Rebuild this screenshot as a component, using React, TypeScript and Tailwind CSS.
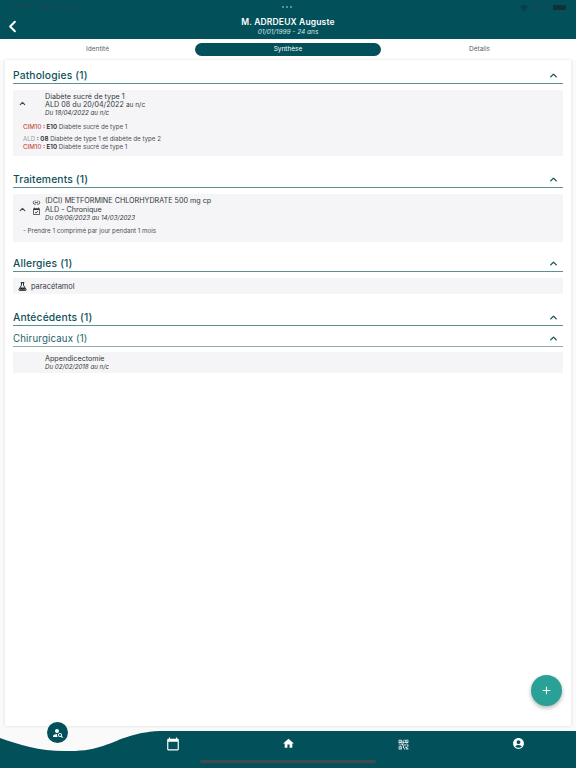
import { ChevronLeft, ChevronUp, Wifi } from "lucide-react";
import {
  MdAccountCircle,
  MdAdd,
  MdCalendarToday,
  MdEventAvailable,
  MdHome,
  MdLink,
  MdPersonSearch,
  MdQrCode2,
} from "react-icons/md";

const font = "font-['Inter','Liberation_Sans',sans-serif]";

function SectionTitle({ title, top }: { title: string; top: string }) {
  return (
    <div className={`flex h-[16px] items-center justify-between ${top}`}>
      <span className="text-[10.3px] font-medium leading-none tracking-[0.15px] text-[#0f5159]">
        {title}
      </span>
      <ChevronUp size={11} strokeWidth={3} className="mr-1 text-[#14525a]" />
    </div>
  );
}

function Rule() {
  return <div className="h-[1px] bg-[#5d9190]" />;
}

function Code({ label, code, text, muted }: { label: string; code: string; text: string; muted?: boolean }) {
  return (
    <p className="text-[6.2px] leading-[7.5px] text-[#4b4f52]">
      <span className={muted ? "text-[#9a9ca0]" : "font-medium text-[#c8503f]"}>{label}</span>
      <span className="font-semibold text-[#26292b]"> : {code}</span> {text}
    </p>
  );
}

function Flask() {
  return (
    <svg viewBox="0 0 10 10" width="9" height="9" className="text-[#26292b]">
      <path d="M3 0.7 H7 M3.9 0.7 V3.6 L1 8.4 Q0.7 9.3 1.6 9.3 H8.4 Q9.3 9.3 9 8.4 L6.1 3.6 V0.7" fill="none" stroke="currentColor" strokeWidth="1.1" />
      <path d="M2.8 6 H7.2 L8.2 8.5 H1.8 Z" fill="currentColor" />
    </svg>
  );
}

export default function App() {
  return (
    <div className={`relative flex h-[768px] w-[576px] flex-col overflow-hidden bg-[#fafafa] ${font}`}>
      <header className="relative h-[39px] shrink-0 bg-[#02505a] text-white">
        <div className="flex h-[15px] items-center justify-between pl-[9px] pr-[10px] text-[6.5px] font-medium text-[#1d4650]">
          <span>1:50 PM&nbsp;&nbsp; Mardi 13 juin</span>
          <span className="absolute left-[282px] top-[6px] flex gap-[2px]">
            <i className="h-[2px] w-[2px] rounded-full bg-[#7da5aa]" />
            <i className="h-[2px] w-[2px] rounded-full bg-[#7da5aa]" />
            <i className="h-[2px] w-[2px] rounded-full bg-[#7da5aa]" />
          </span>
          <span className="flex items-center gap-[3px]">
            <Wifi size={8} strokeWidth={3} className="text-[#10303a]" />
            100 %
            <i className="h-[5px] w-[13px] rounded-[1px] bg-[#10303a]" />
          </span>
        </div>
        <ChevronLeft size={19} strokeWidth={2.5} className="absolute left-[3px] top-[17px] text-white" />
        <div className="text-center">
          <p className="mt-[2px] text-[8.5px] font-semibold leading-[11px] tracking-[0.15px]">M. ADRDEUX Auguste</p>
          <p className="text-[6.5px] italic leading-[8px] text-[#d6e4e6]">01/01/1999 - 24 ans</p>
        </div>
      </header>

      <nav className="grid h-[21px] shrink-0 grid-cols-[195px_186px_195px] items-center bg-white text-center text-[6.5px] text-[#5b5f62]">
        <span>Identité</span>
        <span className="rounded-full bg-[#02505a] py-[2.5px] leading-[7.5px] text-white">Synthèse</span>
        <span className="pl-[2px]">Détails</span>
      </nav>

      <main className="mx-[5px] h-[666px] shrink-0 rounded-[2px] bg-white px-[8px] text-[#34383b] shadow-[0_0_3px_rgba(0,0,0,0.14)]">
        <SectionTitle title="Pathologies (1)" top="mt-[7px]" />
        <Rule />
        <div className="mt-[6px] h-[66px] bg-[#f5f5f7] pl-[10px] pt-[3px]">
          <div className="flex">
            <ChevronUp size={9} strokeWidth={3} className="-ml-[5px] mt-[6px] text-[#3b4a4e]" />
            <div className="ml-[18px] text-[7.2px] leading-[8px]">
              <p>Diabète sucré de type 1</p>
              <p>ALD 08 du 20/04/2022 <span className="text-[6.5px]">au n/c</span></p>
              <p className="text-[6.2px] italic leading-[7.5px]">Du 18/04/2022 au n/c</p>
            </div>
          </div>
          <div className="mt-[6px]">
            <Code label="CIM10" code="E10" text="Diabète sucré de type 1" />
          </div>
          <div className="mt-[5px]">
            <Code label="ALD" code="08" text="Diabète de type 1 et diabète de type 2" muted />
            <Code label="CIM10" code="E10" text="Diabète sucré de type 1" />
          </div>
        </div>

        <SectionTitle title="Traitements (1)" top="mt-[15px]" />
        <Rule />
        <div className="mt-[6px] h-[48px] bg-[#f5f5f7] pl-[10px] pt-[3px]">
          <div className="flex">
            <ChevronUp size={9} strokeWidth={3} className="-ml-[5px] mt-[8px] text-[#3b4a4e]" />
            <div className="ml-[5px] mt-[1px] flex flex-col text-[#34383b]">
              <MdLink size={9} />
              <MdEventAvailable size={9} />
            </div>
            <div className="ml-[4px] text-[7.2px] leading-[8.5px]">
              <p>(DCI) METFORMINE CHLORHYDRATE 500 mg cp</p>
              <p>ALD - Chronique</p>
              <p className="text-[6.2px] italic leading-[7.5px]">Du 09/06/2023 au 14/03/2023</p>
            </div>
          </div>
          <p className="mt-[5px] text-[6.2px] leading-[8px] text-[#4b4f52]">- Prendre 1 comprimé par jour pendant 1 mois</p>
        </div>

        <SectionTitle title="Allergies (1)" top="mt-[13px]" />
        <Rule />
        <div className="mt-[6px] flex h-[16px] items-center bg-[#f5f5f7] pl-[5px] pt-[1px] text-[7.4px]">
          <Flask />
          <span className="ml-[4px]">paracétamol</span>
        </div>

        <SectionTitle title="Antécédents (1)" top="mt-[15px]" />
        <Rule />
        <div className="mt-[4px] flex h-[16px] items-center justify-between pt-[1px]">
          <span className="text-[9.7px] leading-none tracking-[0.15px] text-[#1c6068]">Chirurgicaux (1)</span>
          <ChevronUp size={11} strokeWidth={3} className="mr-1 text-[#14525a]" />
        </div>
        <div className="h-[1px] bg-[#8fb0b0]" />
        <div className="mt-[5px] h-[21px] bg-[#f5f5f7] pl-[32px] pt-[3px] text-[7.2px] leading-[8px]">
          <p>Appendicectomie</p>
          <p className="text-[6.2px] italic leading-[7.5px]">Du 02/02/2018 au n/c</p>
        </div>
      </main>

      <button className="absolute left-[531px] top-[675px] flex h-[31px] w-[31px] items-center justify-center rounded-full bg-[#2aa197] text-white shadow-[0_2px_4px_rgba(0,0,0,0.3)]">
        <MdAdd size={13} />
      </button>

      <footer className="relative mt-[5px] h-[37px] shrink-0">
        <svg viewBox="0 0 576 37" width="576" height="37" className="absolute inset-0">
          <path
            d="M0 7 C20 14 42 21 70 20 C100 20 110 11 130 5 C140 2 150 0 165 0 L576 0 L576 37 L0 37 Z"
            fill="#02505a"
          />
        </svg>
        <div className="absolute left-[47px] top-[-9px] flex h-[21px] w-[21px] items-center justify-center rounded-full bg-[#02505a] text-white">
          <MdPersonSearch size={12} />
        </div>
        <MdCalendarToday size={14} className="absolute left-[166px] top-[6px] text-white" />
        <MdHome size={13} className="absolute left-[282px] top-[6px] text-white" />
        <MdQrCode2 size={13} className="absolute left-[397px] top-[7px] text-[#dfe9ea]" />
        <MdAccountCircle size={13} className="absolute left-[512px] top-[6px] text-white" />
        <div className="absolute left-[200px] top-[29px] h-[3px] w-[176px] rounded-full bg-[#3f4a4c]" />
      </footer>
    </div>
  );
}
